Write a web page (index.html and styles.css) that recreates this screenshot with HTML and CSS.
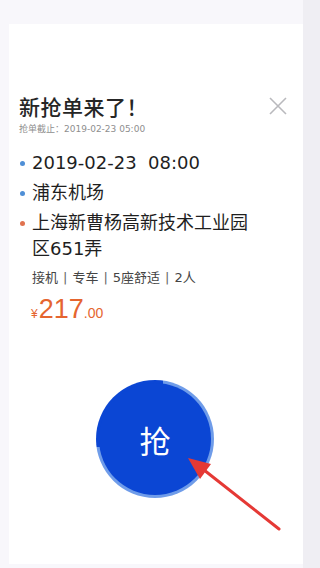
FILE: index.html
```html
<!DOCTYPE html>
<html lang="zh">
<head>
    <meta charset="UTF-8">
    <meta name="viewport" content="width=device-width, initial-scale=1.0">
    <title>新抢单来了</title>
    <link rel="stylesheet" href="styles.css">
</head>
<body>
    <div class="page">
        <div class="card">
            <div class="head">
                <div>
                    <h1 class="title">新抢单来了！</h1>
                    <p class="deadline">抢单截止：2019-02-23 05:00</p>
                </div>
                <svg class="close" width="20" height="20" viewBox="0 0 20 20">
                    <path d="M2 2 L18 18 M18 2 L2 18" stroke="#b9b9bd" stroke-width="1.6" fill="none"/>
                </svg>
            </div>

            <ul class="info">
                <li><span class="dot blue"></span><span>2019-02-23&nbsp;&nbsp;08:00</span></li>
                <li><span class="dot blue"></span><span>浦东机场</span></li>
                <li><span class="dot orange"></span><span>上海新曹杨高新技术工业园区651弄</span></li>
            </ul>

            <p class="tags">接机<span class="sep">|</span>专车<span class="sep">|</span>5座舒适<span class="sep">|</span>2人</p>
            <p class="price"><span class="yen">¥</span><span class="big">217</span><span class="cents">.00</span></p>

            <div class="grab-wrap">
                <div class="ring">
                    <button class="grab">抢</button>
                </div>
                <svg class="arrow" width="110" height="90" viewBox="0 0 110 90">
                    <line x1="99" y1="79" x2="24" y2="20" stroke="#e53935" stroke-width="3" stroke-linecap="round"/>
                    <polygon points="8,8 31,14 20,29" fill="#e53935"/>
                </svg>
            </div>
        </div>
    </div>
</body>
</html>
```

FILE: styles.css
```css
*{
    margin: 0;
    padding: 0;
    box-sizing: border-box;
}
body{
    width: 320px;
    height: 568px;
    overflow: hidden;
    background-color: #f8f7fb;
    font-family: "DejaVu Sans", "Noto Sans CJK SC", sans-serif;
    color: #222;
}
.page{
    height: 568px;
    padding: 24px 17px 4px 9px;
    background: linear-gradient(to right, #f8f7fb 0, #f8f7fb 303px, #efeef3 303px);
}
.card{
    height: 100%;
    background-color: #fff;
    padding: 0 10px 0 10px;
}
.head{
    display: flex;
    justify-content: space-between;
    align-items: flex-start;
    padding-top: 69px;
}
.title{
    font-family: "Noto Sans CJK SC", sans-serif;
    font-size: 21px;
    font-weight: 500;
    line-height: 26px;
    color: #262626;
    letter-spacing: 0.5px;
}
.deadline{
    font-size: 9px;
    line-height: 12px;
    color: #8e8e8e;
    margin-top: 4px;
}
.close{
    margin-top: 3px;
    margin-right: 5px;
}
.info{
    list-style: none;
    margin-top: 15px;
}
.info li{
    display: flex;
    align-items: flex-start;
    font-size: 18px;
    line-height: 26px;
    color: #1f1f1f;
    padding-right: 36px;
    margin-bottom: 4px;
}
.dot{
    flex: none;
    width: 5px;
    height: 5px;
    border-radius: 50%;
    margin: 11px 7px 0 1px;
}
.blue{
    background-color: #4f8fd6;
}
.orange{
    background-color: #e0724f;
}
.tags{
    font-size: 13px;
    line-height: 18px;
    color: #444;
    padding-left: 13px;
    margin-top: 7px;
}
.sep{
    margin: 0 5px;
    color: #666;
}
.price{
    padding-left: 12px;
    color: #e5652f;
    margin-top: 5px;
    line-height: 34px;
    font-family: "Liberation Sans", sans-serif;
}
.yen{
    font-size: 12px;
    margin-right: 1px;
}
.big{
    font-size: 27px;
}
.cents{
    font-size: 14px;
}
.grab-wrap{
    position: relative;
    display: flex;
    justify-content: center;
    margin-top: 49px;
    padding-right: 2px;
}
.ring{
    width: 118px;
    height: 118px;
    border-radius: 50%;
    padding: 3px;
    background: conic-gradient(#0b46d4 0deg 8deg, #6f9ce9 8deg 262deg, #0b46d4 262deg 360deg);
}
.grab{
    width: 100%;
    height: 100%;
    border-radius: 50%;
    border: none;
    background-color: #0b46d4;
    color: #fff;
    font-size: 31px;
    font-family: "Noto Sans CJK SC", sans-serif;
}
.arrow{
    position: absolute;
    left: 161px;
    top: 70px;
}
```
